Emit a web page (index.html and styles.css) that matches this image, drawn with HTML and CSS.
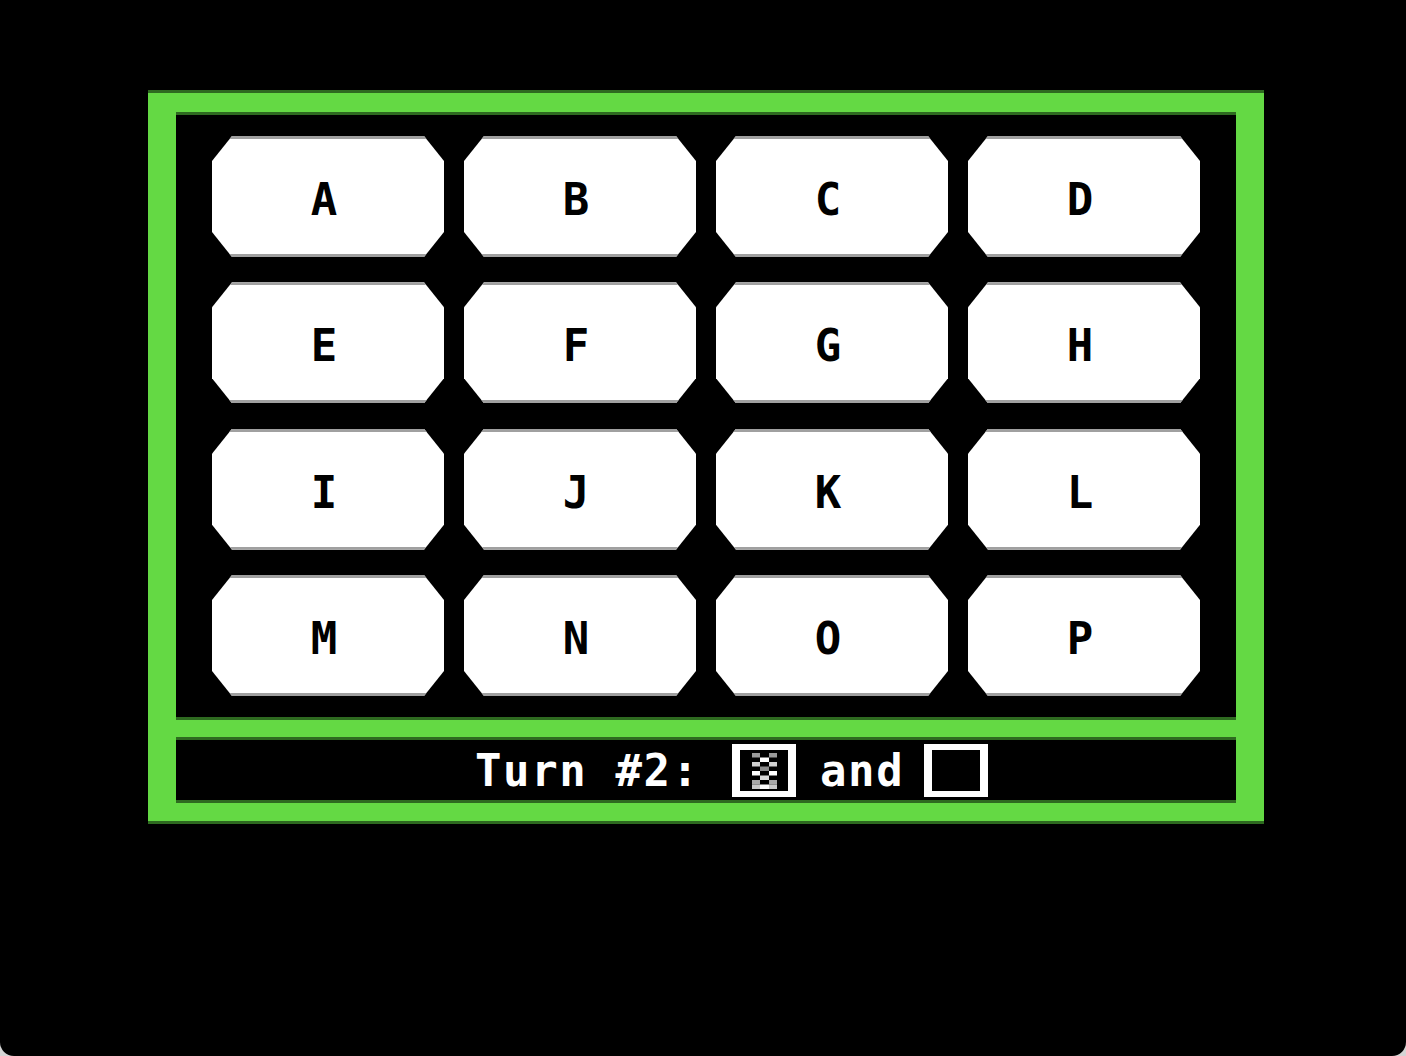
FILE: index.html
```html
<!DOCTYPE html>
<html>
<head>
<meta charset="utf-8">
<title>Memory</title>
<link rel="stylesheet" href="styles.css">
</head>
<body>
<div class="screen">
  <div class="frame">
    <div class="board">
      <div class="card"><span>A</span></div>
      <div class="card"><span>B</span></div>
      <div class="card"><span>C</span></div>
      <div class="card"><span>D</span></div>
      <div class="card"><span>E</span></div>
      <div class="card"><span>F</span></div>
      <div class="card"><span>G</span></div>
      <div class="card"><span>H</span></div>
      <div class="card"><span>I</span></div>
      <div class="card"><span>J</span></div>
      <div class="card"><span>K</span></div>
      <div class="card"><span>L</span></div>
      <div class="card"><span>M</span></div>
      <div class="card"><span>N</span></div>
      <div class="card"><span>O</span></div>
      <div class="card"><span>P</span></div>
    </div>
    <div class="status">
      <span class="label">Turn #2:</span>
      <div class="slot slot-first">
        <svg class="pattern" width="25" height="36" viewBox="0 0 25 36">
          <rect x="0" y="0" width="8" height="4.5" fill="#9a9a9a"/>
          <rect x="17" y="0" width="8" height="4.5" fill="#9a9a9a"/>
          <rect x="8" y="4.5" width="9" height="4.5" fill="#ffffff"/>
          <rect x="0" y="9" width="8" height="4.5" fill="#d0d0d0"/>
          <rect x="17" y="9" width="8" height="4.5" fill="#d0d0d0"/>
          <rect x="8" y="13.5" width="9" height="4.5" fill="#8a8a8a"/>
          <rect x="0" y="18" width="8" height="4.5" fill="#ffffff"/>
          <rect x="17" y="18" width="8" height="4.5" fill="#ffffff"/>
          <rect x="8" y="22.5" width="9" height="4.5" fill="#d8d8d8"/>
          <rect x="0" y="27" width="8" height="4.5" fill="#a8a8a8"/>
          <rect x="17" y="27" width="8" height="4.5" fill="#a8a8a8"/>
          <rect x="8" y="31.5" width="9" height="4.5" fill="#ffffff"/>
          <rect x="0" y="31.5" width="8" height="4.5" fill="#c8c8c8"/>
          <rect x="17" y="31.5" width="8" height="4.5" fill="#c8c8c8"/>
        </svg>
      </div>
      <span class="label label-and">and</span>
      <div class="slot"></div>
    </div>
  </div>
</div>
</body>
</html>
```

FILE: styles.css
```css
html, body {
  margin: 0;
  padding: 0;
  background: #d4d4d4;
}

.screen {
  width: 1406px;
  height: 1056px;
  box-sizing: border-box;
  background: #000;
  border-radius: 0 0 14px 14px;
  padding: 90px 0 0 148px;
  overflow: hidden;
}

.frame {
  width: 1116px;
  box-sizing: border-box;
  background: #64d944;
  padding: 25px 28px 24px 28px;
  box-shadow: inset 0 3px 0 #2e6a20, inset 0 -3px 0 #2e6a20;
}

.board {
  height: 602px;
  box-sizing: border-box;
  background: #000;
  padding: 21px 36px;
  display: grid;
  grid-template-columns: repeat(4, 232px);
  grid-template-rows: repeat(4, 121px);
  column-gap: 20px;
  row-gap: 25.33px;
  box-shadow: 0 -3px 0 #2e6a20, 0 3px 0 #2e6a20;
}

.card {
  background: #fff;
  display: flex;
  align-items: center;
  justify-content: center;
  clip-path: polygon(20px 0, calc(100% - 20px) 0, 100% 25px, 100% calc(100% - 25px), calc(100% - 20px) 100%, 20px 100%, 0 calc(100% - 25px), 0 25px);
  box-shadow: inset 0 3px 0 #a0a0a0, inset 0 -3px 0 #a0a0a0;
}

.card span {
  font-family: "DejaVu Sans Mono", "Liberation Mono", monospace;
  font-weight: bold;
  font-size: 44px;
  line-height: 1;
  color: #000;
  padding: 7px 8px 0 0;
}

.status {
  margin-top: 23px;
  height: 60px;
  box-sizing: border-box;
  background: #000;
  display: flex;
  align-items: center;
  padding-left: 299px;
  box-shadow: 0 -3px 0 #2e6a20, 0 3px 0 #2e6a20;
}

.label {
  font-family: "DejaVu Sans Mono", "Liberation Mono", monospace;
  font-weight: bold;
  font-size: 44px;
  letter-spacing: 1.6px;
  line-height: 1;
  color: #fff;
  white-space: pre;
  width: 257px;
  padding-top: 2px;
}

.label-and {
  width: 104px;
  margin-left: 24px;
}

.slot {
  width: 64px;
  height: 53px;
  box-sizing: border-box;
  border-style: solid;
  border-color: #fff;
  border-width: 6px 8px;
  margin-top: 1px;
  display: flex;
  align-items: center;
  justify-content: center;
}

.pattern {
  display: block;
}
```
